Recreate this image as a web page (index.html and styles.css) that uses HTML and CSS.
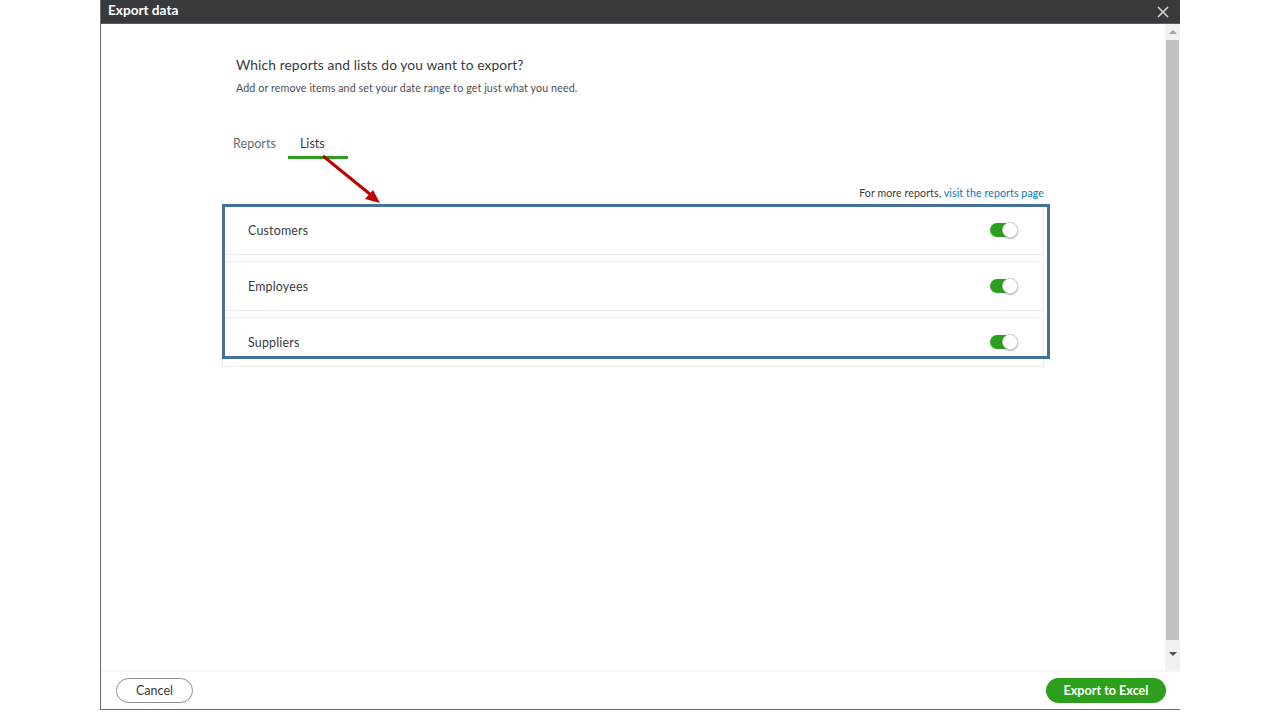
FILE: index.html
```html
<!DOCTYPE html>
<html>
<head>
<meta charset="utf-8">
<link rel="stylesheet" href="styles.css">
</head>
<body>
<div class="dialog">
  <div class="header">
    <span class="title">Export data</span>
    <svg class="close" width="12" height="12" viewBox="0 0 12 12"><path d="M1 1L11 11M11 1L1 11" stroke="#d4d4d6" stroke-width="1.6" fill="none"/></svg>
  </div>
  <div class="main">
    <div class="content">
      <div class="wrap">
        <h1 class="heading">Which reports and lists do you want to export?</h1>
        <p class="sub">Add or remove items and set your date range to get just what you need.</p>
        <div class="tabs">
          <div class="tab tab-reports">Reports</div>
          <div class="tab tab-lists active">Lists</div>
        </div>
        <div class="more">For more reports, <a class="link">visit the reports page</a></div>
        <div class="list">
          <div class="row"><span class="label">Customers</span><span class="toggle"><span class="knob"></span></span></div>
          <div class="row"><span class="label">Employees</span><span class="toggle"><span class="knob"></span></span></div>
          <div class="row"><span class="label">Suppliers</span><span class="toggle"><span class="knob"></span></span></div>
          <div class="highlight"></div>
        </div>
      </div>
      <svg class="arrow" width="80" height="60" viewBox="0 0 80 60">
        <line x1="2" y1="2" x2="50" y2="41" stroke="#c00000" stroke-width="3"/>
        <polygon points="59,49 44,45 52,36" fill="#c00000"/>
      </svg>
    </div>
    <div class="scrollbar">
      <div class="sb-up"><span class="tri-up"></span></div>
      <div class="sb-thumb"></div>
      <div class="sb-down"><span class="tri-down"></span></div>
    </div>
  </div>
  <div class="footer">
    <button class="btn cancel">Cancel</button>
    <button class="btn export">Export to Excel</button>
  </div>
</div>
</body>
</html>
```
FILE: styles.css
```css
* { box-sizing: border-box; }
html, body { margin: 0; padding: 0; background: #fff; }
body { font-family: "Lato", "Open Sans", sans-serif; color: #393a3d; width: 1280px; height: 720px; overflow: hidden; }

.dialog {
  margin-left: 100px;
  width: 1080px;
  height: 710px;
  border-left: 1px solid #6b6b6b;
  border-bottom: 1px solid #6b6b6b;
  display: flex;
  flex-direction: column;
}
.header {
  height: 24px;
  flex: none;
  background: #393a3d;
  display: flex;
  align-items: center;
  justify-content: space-between;
  padding: 0 11px 3px 7px;
  border-bottom: 1px solid #5a5b5e;
}
.title { color: #fff; font-weight: 700; font-size: 13.6px; }
.close { display: block; margin-top: 3px; }

.main { flex: 1; display: flex; min-height: 0; }
.content { flex: 1; position: relative; }
.wrap { margin-left: 121px; width: 822px; padding-top: 32px; }
.heading { margin: 0 0 0 14px; font-size: 13.8px; font-weight: 400; color: #393a3d; letter-spacing: 0.1px; line-height: 18px; }
.sub { margin: 7px 0 0 14px; font-size: 10.7px; color: #4d4e52; line-height: 13px; letter-spacing: 0.1px; }

.tabs { display: flex; margin-top: 40px; height: 30px; }
.tab { font-size: 12.6px; color: #6b6c72; height: 30px; line-height: 20px; }
.tab-reports { padding: 0 12px 0 11px; }
.tab-lists { padding: 0 0 0 12px; width: 60px; color: #393a3d; border-bottom: 3px solid #2ca01c; height: 25px; }

.more { text-align: right; font-size: 10.6px; color: #393a3d; margin-top: 23px; line-height: 13px; letter-spacing: 0.1px; }
.link { color: #0077c5; }

.list { position: relative; margin-top: 5px; display: flex; flex-direction: column; gap: 6px; }
.row {
  height: 50px;
  border: 1px solid #ececec;
  display: flex;
  align-items: center;
  justify-content: space-between;
  padding: 0 26px 0 25px;
}
.label { font-size: 12.4px; color: #393a3d; letter-spacing: 0.2px; }
.toggle {
  position: relative;
  width: 27px;
  height: 14px;
  border-radius: 7px;
  background: #2ca01c;
}
.knob {
  position: absolute;
  right: -1px;
  top: -1px;
  width: 16px;
  height: 16px;
  border-radius: 50%;
  background: #fff;
  border: 1px solid #cfd1d4;
  box-shadow: 0 1px 2px rgba(0,0,0,0.3);
}
.highlight {
  position: absolute;
  left: 0;
  top: -1px;
  width: 828px;
  height: 155px;
  border: 3px solid #44709e;
  pointer-events: none;
}
.arrow { position: absolute; left: 220px; top: 130px; }

.scrollbar { width: 15px; flex: none; background: #f1f1f1; display: flex; flex-direction: column; }
.sb-up, .sb-down { height: 16px; display: flex; align-items: center; justify-content: center; }
.sb-thumb { flex: 1; background: #c1c1c1; margin: 0 1px; }
.sb-down { height: 30px; align-items: flex-start; padding-top: 12px; }
.tri-up { width: 0; height: 0; border-left: 4px solid transparent; border-right: 4px solid transparent; border-bottom: 4px solid #a3a3a3; }
.tri-down { width: 0; height: 0; border-left: 4px solid transparent; border-right: 4px solid transparent; border-top: 4px solid #505050; }

.footer {
  height: 39px;
  flex: none;
  border-top: 2px solid #f4f5f8;
  display: flex;
  align-items: center;
  justify-content: space-between;
  padding: 0 14px 0 15px;
}
.btn { font-family: "Lato", "Open Sans", sans-serif; font-size: 12.6px; height: 25px; border-radius: 13px; cursor: pointer; padding: 0; }
.cancel { width: 77px; background: #fff; border: 1px solid #8d9096; color: #393a3d; }
.export { width: 120px; background: #2ca01c; border: none; color: #fff; font-weight: 700; }
```
